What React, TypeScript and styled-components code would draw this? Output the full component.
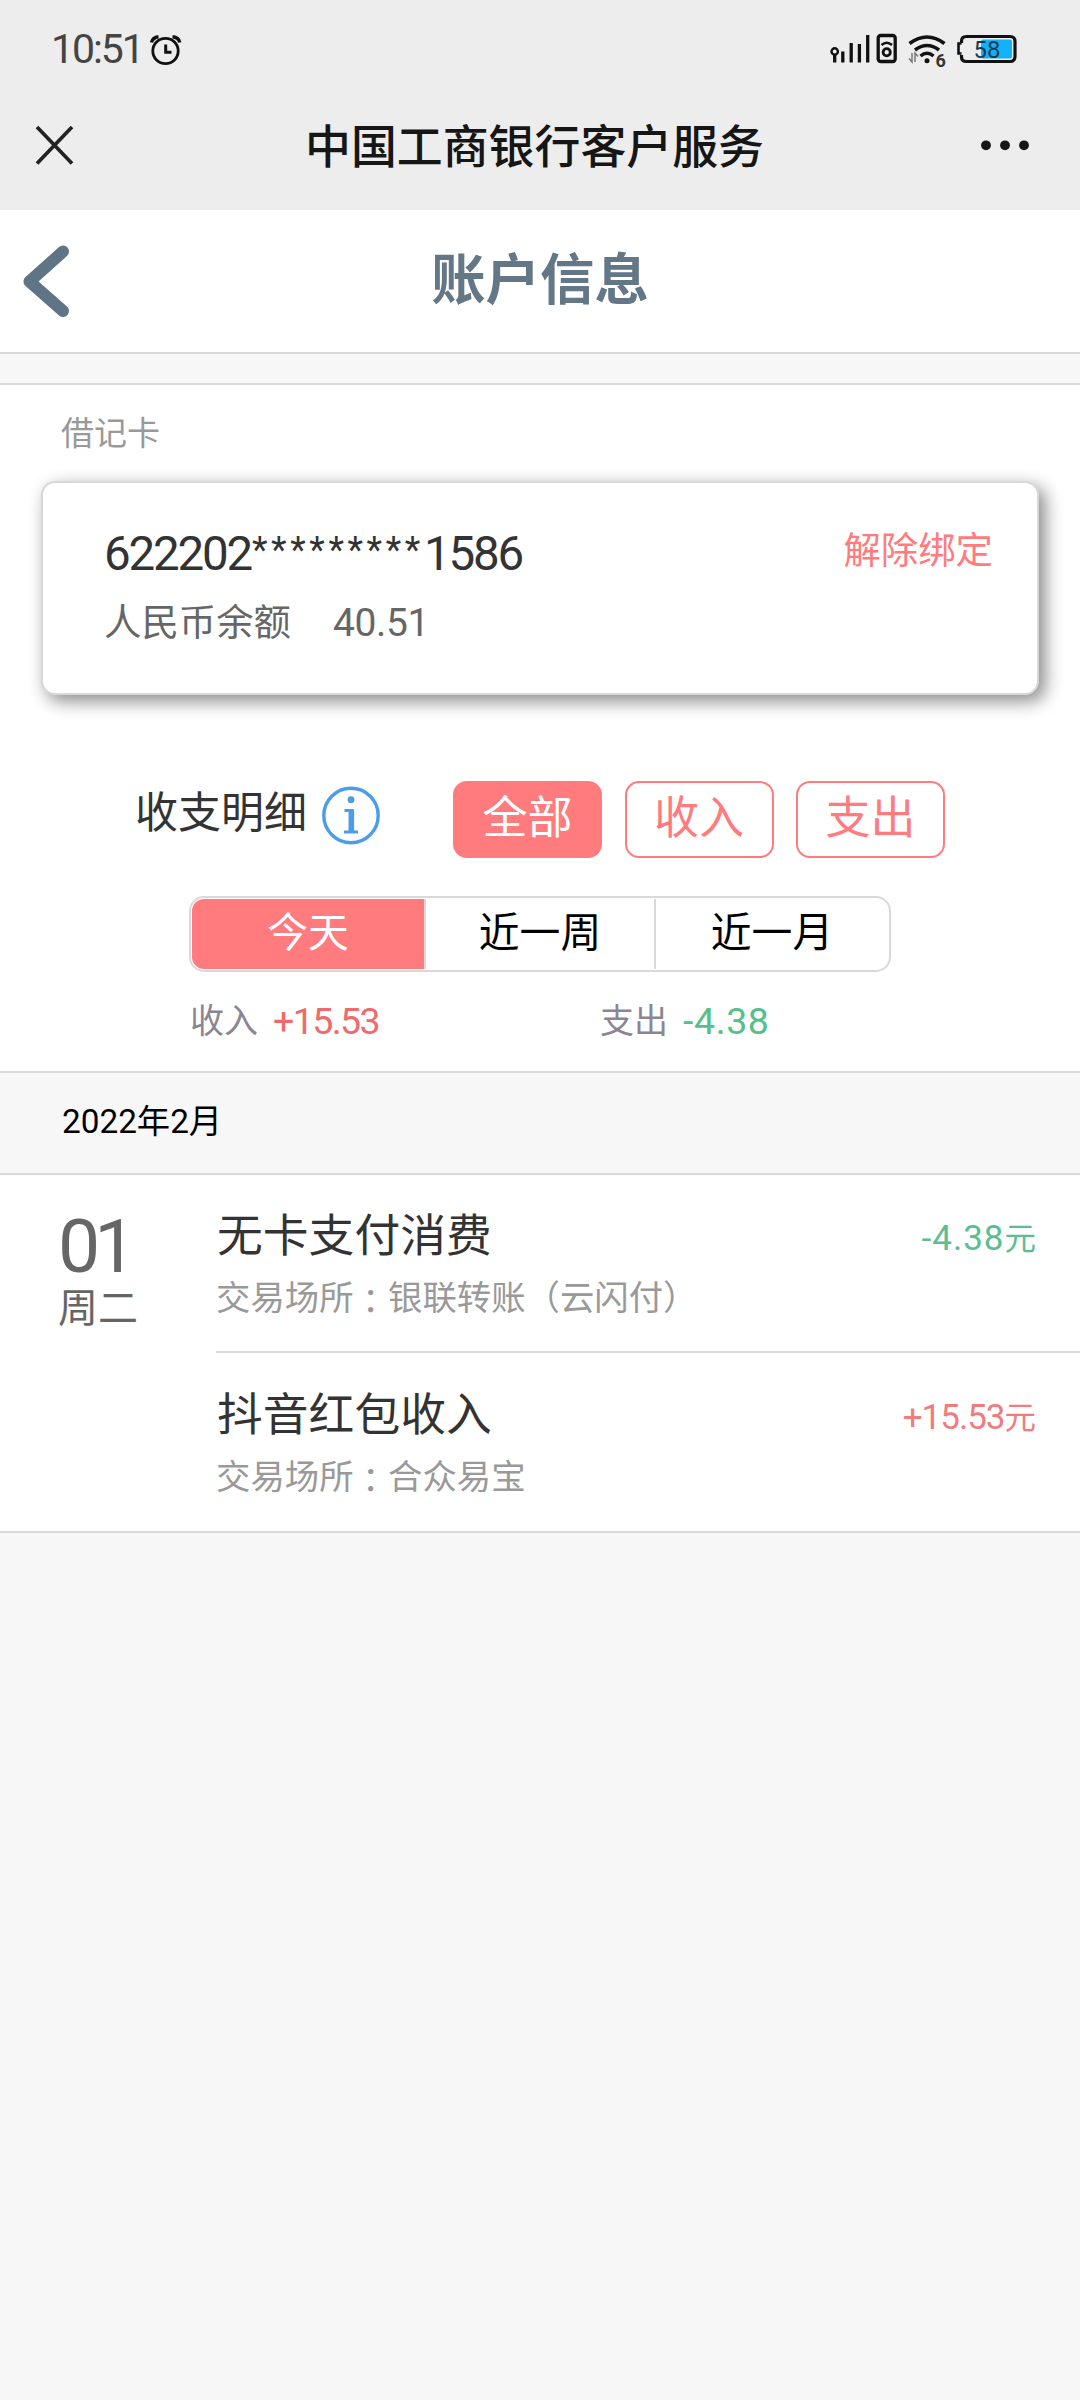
import React from "react";
import styled, { createGlobalStyle } from "styled-components";

const GlobalStyle = createGlobalStyle`
  * { box-sizing: border-box; }
  body {
    margin: 0;
    background: #f7f7f7;
    font-family: Roboto, "Noto Sans CJK SC", sans-serif;
  }
`;

const coral = "#ff7b7d";
const line = "#d9d9d9";

const Screen = styled.div`
  width: 1080px;
  min-height: 2400px;
  background: #f7f7f7;
  white-space: nowrap;
`;

const StatusBar = styled.div`
  height: 80px;
  padding: 0 62px 0 51px;
  display: flex;
  align-items: flex-start;
  background: #ededed;
`;

const Clock = styled.div`
  width: 98px;
  margin-top: 24px;
  font-size: 41px;
  line-height: 50px;
  letter-spacing: -2.1px;
  color: #444;
`;

const AlarmIcon = styled.svg`
  margin-top: 33px;
`;

const StatusIcons = styled.svg`
  margin: 30px 0 0 auto;
`;

const NavBar = styled.div`
  height: 130px;
  padding: 0 46px 0 34px;
  display: grid;
  grid-template-columns: 1fr auto 1fr;
  align-items: center;
  background: #ededed;
`;

const NavTitle = styled.div`
  font-size: 45.9px;
  line-height: 60px;
  font-weight: 500;
  color: #161616;
  padding: 3px 0 0 1px;
`;

const MoreIcon = styled.svg`
  justify-self: end;
`;

const PageHeader = styled.div`
  height: 144px;
  padding: 0 20px;
  display: grid;
  grid-template-columns: 1fr auto 1fr;
  align-items: center;
  background: #fff;
  border-bottom: 2px solid ${line};
`;

const PageTitle = styled.h1`
  margin: 0;
  font-size: 54.4px;
  line-height: 70px;
  font-weight: 700;
  color: #647787;
`;

const Account = styled.section`
  margin-top: 29px;
  height: 688px;
  padding-top: 29px;
  background: #fff;
  border-top: 2px solid ${line};
`;

const CardType = styled.div`
  margin-left: 61px;
  font-size: 33px;
  line-height: 40px;
  color: #999;
`;

const Card = styled.div`
  margin: 27px 41px 0;
  height: 214px;
  padding: 41px 44px 0 61px;
  display: flex;
  justify-content: space-between;
  border: 2px solid #d8d8d8;
  border-radius: 14px;
  background: #fff;
  box-shadow: 6px 6px 18px #888;
`;

const CardNumber = styled.div`
  font-size: 47.5px;
  line-height: 60px;
  letter-spacing: -2.2px;
  color: #333;
`;

const Mask = styled.span`
  margin-left: 1px;
  font-size: 36px;
  line-height: 0;
  letter-spacing: 3.6px;
  vertical-align: 8px;
`;

const Balance = styled.div`
  margin-top: 14px;
  display: flex;
  gap: 42px;
  font-size: 37.4px;
  line-height: 50px;
  color: #666;
`;

const BalanceValue = styled.span`
  font-size: 39px;
  letter-spacing: -0.4px;
`;

const Unbind = styled.div`
  margin-top: 2px;
  font-size: 37.4px;
  line-height: 50px;
  color: ${coral};
`;

const FilterRow = styled.div`
  margin-top: 86px;
  height: 77px;
  padding-left: 135px;
  display: flex;
`;

const FilterTitle = styled.div`
  width: 186px;
  font-size: 43px;
  line-height: 65px;
  color: #333;
`;

const InfoIcon = styled.svg`
  margin: 5px 72px 0 0;
`;

const Filters = styled.div`
  display: flex;
  gap: 22.5px;
`;

const FilterButton = styled.div<{ $active?: boolean }>`
  width: 149px;
  height: 77px;
  font-size: 45px;
  line-height: 72px;
  text-align: center;
  border: 2px solid ${coral};
  border-radius: 14px;
  color: ${(p) => (p.$active ? "#fff" : coral)};
  background: ${(p) => (p.$active ? coral : "#fff")};
`;

const Segments = styled.div`
  margin: 38px 0 0 189px;
  width: 702px;
  height: 76px;
  padding: 1px;
  display: grid;
  grid-template-columns: 234px 230px 1fr;
  border: 2px solid ${line};
  border-radius: 15px;
`;

const Segment = styled.div<{ $active?: boolean }>`
  font-size: 40.8px;
  line-height: 68px;
  text-align: center;
  color: ${(p) => (p.$active ? "#fff" : "#000")};
  background: ${(p) => (p.$active ? coral : "#fff")};
  border-right: 2px solid ${line};
  border-radius: ${(p) => (p.$active ? "12px 0 0 12px" : "0")};
  &:last-child {
    border-right: 0;
    border-radius: 12px;
  }
`;

const Summary = styled.div`
  margin: 27px 0 0 190px;
  display: grid;
  grid-template-columns: 410px 1fr;
`;

const SummaryItem = styled.div`
  display: flex;
  gap: 15px;
  font-size: 34px;
  line-height: 44px;
  color: #8d8591;
`;

const Amount = styled.span<{ $income?: boolean }>`
  font-size: 37.5px;
  letter-spacing: ${(p) => (p.$income ? "-1.6px" : "0.6px")};
  color: ${(p) => (p.$income ? "#f06a6c" : "#55c08c")};
`;

const Month = styled.div`
  height: 104px;
  padding-left: 62px;
  font-size: 33.3px;
  line-height: 98px;
  color: #000;
  border-top: 2px solid ${line};
  border-bottom: 2px solid ${line};
`;

const Day = styled.div`
  display: flex;
  background: #fff;
  border-bottom: 2px solid ${line};
`;

const DateColumn = styled.div`
  width: 216px;
  padding: 31px 0 0 58px;
  color: #666;
`;

const DayNumber = styled.div`
  font-size: 75px;
  line-height: 80px;
  letter-spacing: -6px;
  font-weight: 400;
`;

const Weekday = styled.div`
  margin-top: -2px;
  font-size: 40px;
  line-height: 49px;
`;

const Records = styled.div`
  flex: 1;
`;

const RecordRow = styled.div`
  height: 178px;
  padding: 37px 44px 0 0;
  display: flex;
  justify-content: space-between;
  border-bottom: 2px solid ${line};
  &:last-child {
    padding-top: 38px;
    border-bottom: 0;
  }
`;

const RecordTitle = styled.div`
  padding-left: 1px;
  font-size: 45.8px;
  line-height: 50px;
  color: #333;
`;

const RecordPlace = styled.div`
  margin-top: 14px;
  font-size: 34.4px;
  line-height: 44px;
  color: #999;
`;

const Colon = styled.span`
  font-family: "Noto Sans CJK TC", sans-serif;
  line-height: 0;
  vertical-align: -4px;
`;

const RecordAmount = styled.div<{ $income?: boolean }>`
  font-size: 35px;
  line-height: 54px;
  letter-spacing: ${(p) => (p.$income ? "-1px" : "1px")};
  color: ${(p) => (p.$income ? "#f07c7e" : "#5cbd93")};
`;

const Unit = styled.span`
  font-size: 31.5px;
  letter-spacing: 0;
`;

const BatteryText = styled.text`
  font: 400 24px Roboto, sans-serif;
  fill: #173a52;
`;

const WifiText = styled.text`
  font: 700 18px Roboto, sans-serif;
  fill: #333;
`;

const records = [
  { title: "无卡支付消费", place: "银联转账（云闪付）", amount: "-4.38", income: false },
  { title: "抖音红包收入", place: "合众易宝", amount: "+15.53", income: true },
];

export default function App() {
  return (
    <>
      <GlobalStyle />
      <Screen>
        <StatusBar>
          <Clock>10:51</Clock>
          <AlarmIcon width="34" height="34" viewBox="149 33 34 34" fill="none" stroke="#111">
            <circle cx="165.5" cy="51" r="12.7" strokeWidth="2.8" />
            <path d="M151.5 42.5Q152.5 37.5 158.5 36.7M172.5 36.7Q179 37.5 179.8 42.5" strokeWidth="3.4" />
            <path d="M165.7 44.5V52.2H171.5" strokeWidth="3" />
          </AlarmIcon>
          <StatusIcons width="190" height="40" viewBox="828 30 190 40" fill="none" stroke="#111">
            <circle cx="834.7" cy="51.5" r="3.2" strokeWidth="2.4" />
            <path d="M834.7 54.5V62.5M842.8 51.5V62.5M851.2 43V62.5M859.4 44V62.5M867.7 35V62.5" strokeWidth="3.3" />
            <rect x="878.2" y="35.5" width="17" height="26" rx="2.5" strokeWidth="3.3" />
            <circle cx="886.7" cy="52.3" r="3.6" strokeWidth="2.8" />
            <path d="M881.5 45Q886.7 40.5 892 45" strokeWidth="2.6" />
            <path d="M909.5 43.5Q927 30.5 944.5 43.5" strokeWidth="3.5" />
            <path d="M915 50Q927 41 939 50" strokeWidth="3.5" />
            <path d="M920.5 56Q927 50.5 933.5 56" strokeWidth="3.5" />
            <circle cx="927" cy="60.8" r="2.5" fill="#111" stroke="none" />
            <path d="M912 53V62L909 58.5M915 62V53L918 56.5" stroke="#777" strokeWidth="1.5" />
            <WifiText x="935.5" y="67" stroke="none">6</WifiText>
            <rect x="981" y="39.5" width="31" height="19" rx="2" fill="#12b2fb" stroke="none" />
            <path d="M961.5 43V41Q961.5 36.5 966.5 36.5H1010Q1015 36.5 1015 41.5V56.5Q1015 61.5 1010 61.5H966.5Q961.5 61.5 961.5 57V55" strokeWidth="3.2" />
            <path d="M961.5 43.5H958.5V53.5H961.5" strokeWidth="2.6" />
            <BatteryText x="973.5" y="57.8" stroke="none">58</BatteryText>
          </StatusIcons>
        </StatusBar>

        <NavBar>
          <svg width="42" height="42" viewBox="0 0 42 42" fill="none" stroke="#222" strokeWidth="3.7">
            <path d="M3 3L38 39.5M38 3L3 39.5" />
          </svg>
          <NavTitle>中国工商银行客户服务</NavTitle>
          <MoreIcon width="54" height="12" viewBox="0 0 54 12" fill="#161616">
            <circle cx="6" cy="6.3" r="4.9" />
            <circle cx="25" cy="6.3" r="4.9" />
            <circle cx="44" cy="6.3" r="4.9" />
          </MoreIcon>
        </NavBar>

        <PageHeader>
          <svg width="52" height="76" viewBox="20 243 52 76" fill="none" stroke="#5f7485" strokeWidth="12" strokeLinecap="round" strokeLinejoin="round">
            <path d="M63 251.5L29.5 281.5L63 311" />
          </svg>
          <PageTitle>账户信息</PageTitle>
        </PageHeader>

        <Account>
          <CardType>借记卡</CardType>
          <Card>
            <div>
              <CardNumber>
                622202<Mask>*********</Mask>1586
              </CardNumber>
              <Balance>
                人民币余额<BalanceValue>40.51</BalanceValue>
              </Balance>
            </div>
            <Unbind>解除绑定</Unbind>
          </Card>

          <FilterRow>
            <FilterTitle>收支明细</FilterTitle>
            <InfoIcon width="60" height="60" viewBox="0 0 60 60" fill="none" stroke="#4b9de8">
              <circle cx="30" cy="29.5" r="27.2" strokeWidth="3.4" />
              <circle cx="30" cy="13.7" r="3.4" fill="#4b9de8" stroke="none" />
              <path d="M23.5 24.5H30.3V45M23 46H37" strokeWidth="2.8" />
              <path d="M30.3 23.2V46" strokeWidth="5.6" />
            </InfoIcon>
            <Filters>
              <FilterButton $active>全部</FilterButton>
              <FilterButton>收入</FilterButton>
              <FilterButton>支出</FilterButton>
            </Filters>
          </FilterRow>

          <Segments>
            <Segment $active>今天</Segment>
            <Segment>近一周</Segment>
            <Segment>近一月</Segment>
          </Segments>

          <Summary>
            <SummaryItem>
              收入<Amount $income>+15.53</Amount>
            </SummaryItem>
            <SummaryItem>
              支出<Amount>-4.38</Amount>
            </SummaryItem>
          </Summary>
        </Account>

        <Month>2022年2月</Month>

        <Day>
          <DateColumn>
            <DayNumber>01</DayNumber>
            <Weekday>周二</Weekday>
          </DateColumn>
          <Records>
            {records.map((r) => (
              <RecordRow key={r.title}>
                <div>
                  <RecordTitle>{r.title}</RecordTitle>
                  <RecordPlace>
                    交易场所<Colon>：</Colon>
                    {r.place}
                  </RecordPlace>
                </div>
                <RecordAmount $income={r.income}>
                  {r.amount}
                  <Unit>元</Unit>
                </RecordAmount>
              </RecordRow>
            ))}
          </Records>
        </Day>
      </Screen>
    </>
  );
}
